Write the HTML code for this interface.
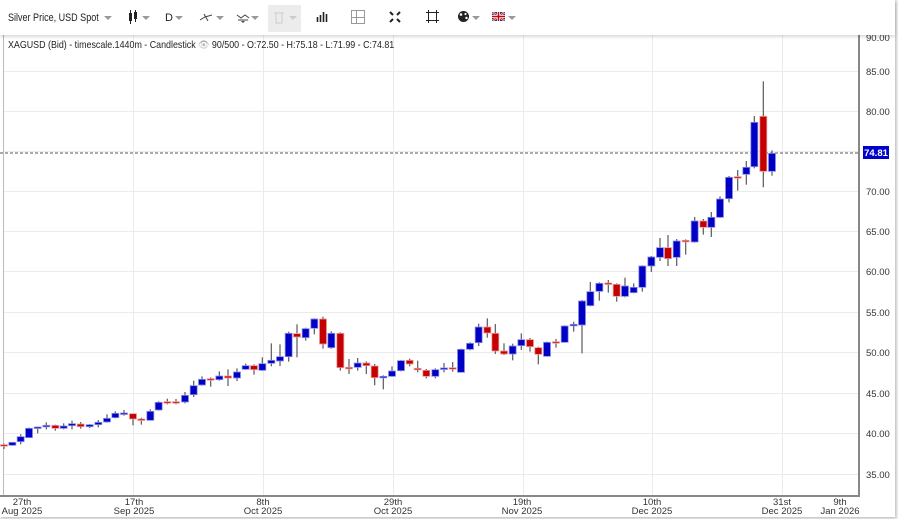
<!DOCTYPE html>
<html><head><meta charset="utf-8">
<style>
*{margin:0;padding:0;box-sizing:border-box}
body{width:898px;height:519px;background:#f2f2f2;font-family:"Liberation Sans",Arial,sans-serif;overflow:hidden;position:relative}
#frame{position:absolute;left:0;top:0;width:895px;height:517px;background:#fff;box-shadow:1px 1px 3px rgba(0,0,0,.25)}
#tb{position:absolute;left:0;top:0;width:895px;height:35px;background:#fff;box-shadow:0 2px 3px rgba(0,0,0,.15);z-index:5}
.t{position:absolute;top:12px;font-size:11px;color:#222;white-space:nowrap}
.car{position:absolute;top:16px;width:0;height:0;border-left:4px solid transparent;border-right:4px solid transparent;border-top:4px solid #999}
svg{position:absolute;left:0;top:0}
</style></head><body>
<div id="frame"></div>
<svg width="898" height="519" id="c">
<g stroke="#ebebeb" stroke-width="1">
<line x1="133.5" y1="35" x2="133.5" y2="495"/><line x1="263.5" y1="35" x2="263.5" y2="495"/><line x1="393.5" y1="35" x2="393.5" y2="495"/><line x1="523.5" y1="35" x2="523.5" y2="495"/><line x1="652.5" y1="35" x2="652.5" y2="495"/><line x1="782.5" y1="35" x2="782.5" y2="495"/>
<line x1="3" y1="71.5" x2="858" y2="71.5"/><line x1="3" y1="111.5" x2="858" y2="111.5"/><line x1="3" y1="151.5" x2="858" y2="151.5"/><line x1="3" y1="191.5" x2="858" y2="191.5"/><line x1="3" y1="231.5" x2="858" y2="231.5"/><line x1="3" y1="271.5" x2="858" y2="271.5"/><line x1="3" y1="312.5" x2="858" y2="312.5"/><line x1="3" y1="352.5" x2="858" y2="352.5"/><line x1="3" y1="393.5" x2="858" y2="393.5"/><line x1="3" y1="433.5" x2="858" y2="433.5"/><line x1="3" y1="474.5" x2="858" y2="474.5"/>
</g>
<line x1="3.5" y1="35" x2="3.5" y2="495" stroke="#bbb"/>
<line x1="859" y1="35" x2="859" y2="497" stroke="#888" stroke-width="2"/>
<line x1="0" y1="496" x2="860" y2="496" stroke="#888" stroke-width="2"/>
<line x1="0" y1="153" x2="858" y2="153" stroke="#555" stroke-dasharray="3,2"/>
<g id="cd"></g>
<g font-size="9.5" fill="#333" font-family="Liberation Sans,Arial,sans-serif">
<text x="866" y="41">90.00</text><text x="866" y="75">85.00</text><text x="866" y="115">80.00</text><text x="866" y="195">70.00</text><text x="866" y="235">65.00</text><text x="866" y="275">60.00</text><text x="866" y="316">55.00</text><text x="866" y="356">50.00</text><text x="866" y="397">45.00</text><text x="866" y="437">40.00</text><text x="866" y="478">35.00</text>
</g>
<rect x="863" y="146" width="26" height="13" fill="#0000cc"/>
<text x="876" y="156" font-size="9.5" font-weight="bold" fill="#fff" text-anchor="middle" font-family="Liberation Sans,Arial,sans-serif">74.81</text>
<g font-size="9.5" fill="#333" text-anchor="middle" font-family="Liberation Sans,Arial,sans-serif">
<text x="22" y="505">27th</text><text x="22" y="514">Aug 2025</text>
<text x="134" y="505">17th</text><text x="134" y="514">Sep 2025</text>
<text x="263" y="505">8th</text><text x="263" y="514">Oct 2025</text>
<text x="393" y="505">29th</text><text x="393" y="514">Oct 2025</text>
<text x="522" y="505">19th</text><text x="522" y="514">Nov 2025</text>
<text x="652" y="505">10th</text><text x="652" y="514">Dec 2025</text>
<text x="782" y="505">31st</text><text x="782" y="514">Dec 2025</text>
<text x="840" y="505">9th</text><text x="840" y="514">Jan 2026</text>
</g>
<text x="8" y="48" font-size="10" fill="#222" font-family="Liberation Sans,Arial,sans-serif" transform="translate(8 0) scale(0.89 1) translate(-8 0)">XAGUSD (Bid) - timescale.1440m - Candlestick <tspan fill="#aaa">👁</tspan> 90/500 - O:72.50 - H:75.18 - L:71.99 - C:74.81</text>
</svg>
<div id="tb">
<span class="t" style="left:8px;transform:scaleX(0.82);transform-origin:left">Silver Price, USD Spot</span><span class="car" style="left:104px"></span>
<svg style="left:128px;top:10px" width="10" height="14"><rect x="1" y="3" width="3" height="8" fill="#222"/><line x1="2.5" y1="0" x2="2.5" y2="14" stroke="#222"/><rect x="6" y="2" width="3" height="7" fill="#222"/><line x1="7.5" y1="0" x2="7.5" y2="12" stroke="#222"/></svg><span class="car" style="left:142px"></span>
<span class="t" style="left:165px">D</span><span class="car" style="left:175px"></span>
<svg style="left:199px;top:11px" width="14" height="12"><path d="M1 9 L6 6 L13 4 M5 3 L9 10" stroke="#444" fill="none"/></svg><span class="car" style="left:216px"></span>
<svg style="left:236px;top:11px" width="14" height="12"><path d="M1 4 L5 7 L9 4 L13 7 M2 9 L12 9" stroke="#444" fill="none"/><path d="M5 10 L7 12 L9 10Z" fill="#444"/></svg><span class="car" style="left:251px"></span>
<div style="position:absolute;left:268px;top:5px;width:33px;height:27px;background:#ececec"></div>
<svg style="left:273px;top:11px" width="12" height="13"><path d="M1 2 H11 M3 2 V12 H9 V2" stroke="#ccc" fill="none"/></svg><span class="car" style="left:289px;border-top-color:#ccc"></span>
<svg style="left:316px;top:12px" width="12" height="10"><path d="M1.5 5V10M4.5 3V10M7.5 0V10M10.5 2V10" stroke="#222" stroke-width="1.6"/></svg>
<svg style="left:351px;top:10px" width="14" height="14"><rect x="0.5" y="0.5" width="13" height="13" fill="none" stroke="#999"/><path d="M5.5 1V13M1 7.5H13" stroke="#999"/></svg>
<svg style="left:389px;top:11px" width="12" height="12"><path d="M1 1L4 4M11 1L8 4M1 11L4 8M11 11L8 8" stroke="#222" stroke-width="2"/></svg>
<svg style="left:426px;top:10px" width="13" height="13"><rect x="2.5" y="2.5" width="8" height="8" fill="none" stroke="#222"/><path d="M0 2.5H13M0 10.5H13M2.5 0V13M10.5 0V13" stroke="#222"/></svg>
<svg style="left:457px;top:10px" width="13" height="13"><circle cx="6.5" cy="6.5" r="5.5" fill="#222"/><circle cx="4" cy="4.5" r="1.3" fill="#fff"/><circle cx="8.5" cy="4" r="1.1" fill="#fff"/><circle cx="9.5" cy="8" r="1.2" fill="#fff"/></svg><span class="car" style="left:472px"></span>
<svg style="left:492px;top:12px" width="13" height="9"><rect width="13" height="9" fill="#1a3a8a"/><path d="M0 0L13 9M13 0L0 9" stroke="#fff" stroke-width="2"/><path d="M0 0L13 9M13 0L0 9" stroke="#c00" stroke-width="0.8"/><path d="M6.5 0V9M0 4.5H13" stroke="#fff" stroke-width="3"/><path d="M6.5 0V9M0 4.5H13" stroke="#c00" stroke-width="1.5"/></svg><span class="car" style="left:508px"></span>
</div>
<script>
var A=[[12,434,438,431,447,'r'],[37,427,436,426,437,'b'],[62,410,425,403,433,'b'],[87,385,413,383,414,'b'],[113,381,384,380,400,'b'],[139,376,380,367,388,'b'],[166,376,385,374,392,'r'],[191,378,385,370,388,'b'],[216,371,377,362,388,'b'],[242,372,380,366,386,'r'],[269,374,380,372,384,'b'],[295,367,374,360,382,'b'],[321,355,366,343,368,'b'],[346,340,353,334,355,'b'],[372,339,343,330,347,'b'],[399,341,357,341,376,'r'],[424,357,361,353,374,'r'],[451,334,361,328,362,'b'],[476,307,330,304,332,'b'],[502,305,309,296,313,'r'],[528,305,309,297,313,'r'],[555,286,306,276,310,'b'],[581,257,284,242,291,'b'],[606,238,255,229,257,'b'],[632,236,240,232,260,'r'],[658,228,239,214,242,'b'],[684,228,234,208,258,'r'],[711,216,234,205,243,'b'],[737,197,208,191,210,'b'],[762,197,209,193,224,'r'],[787,191,211,172,213,'b'],[814,181,190,130,199,'b'],[840,170,183,133,198,'b'],[866,100,170,95,185,'b'],[891,101,111,73,172,'r']];
var B=[[17,86,113,83,122,'b'],[43,57,85,55,103,'b'],[69,57,132,50,146,'r'],[94,100,143,94,146,'b'],[121,100,203,97,212,'r'],[147,202,206,177,222,'r'],[173,189,202,174,212,'b'],[199,189,197,184,222,'r'],[224,198,233,192,256,'r'],[250,229,233,226,268,'b'],[276,213,229,199,231,'b'],[303,182,212,180,214,'b'],[329,181,192,176,199,'r'],[353,205,209,182,217,'r'],[379,211,229,207,235,'r'],[406,209,229,205,235,'b'],[432,204,208,189,217,'b'],[458,203,207,186,215,'r'],[483,148,217,146,218,'b'],[510,130,148,127,151,'b'],[536,81,128,71,138,'b'],[562,81,99,55,113,'r'],[586,100,153,72,162,'r'],[612,153,162,130,165,'r'],[638,138,162,131,181,'b'],[664,119,137,100,150,'b'],[690,119,140,114,155,'r'],[715,143,163,140,193,'r'],[741,127,169,125,170,'b'],[768,125,129,117,143,'r']];
var C=[[14,528,577,526,578,'b'],[41,523,527,515,545,'b'],[66,453,525,450,610,'b'],[91,425,467,396,469,'b'],[118,400,424,397,452,'b'],[145,399,403,390,428,'r'],[170,403,439,400,455,'r'],[195,408,439,383,442,'b'],[221,412,428,400,430,'b'],[247,348,412,346,425,'b'],[274,321,348,318,366,'b'],[300,293,322,264,333,'b'],[324,293,326,255,348,'r'],[350,273,322,267,348,'b'],[377,271,275,268,314,'r'],[404,213,276,201,278,'b'],[430,213,232,207,254,'r'],[454,202,232,186,261,'b'],[480,147,202,139,204,'b'],[507,82,146,78,157,'b'],[533,80,84,60,122,'r'],[559,52,73,33,104,'b']];
var D=[[163,307,440,288,445,'b'],[190,289,454,184,502,'r'],[216,400,454,391,467,'b']];
var g=document.getElementById('cd'),h='';
function add(arr,ox,oy){arr.forEach(function(c){var x=ox+c[0]/3,t=oy+c[1]/3,b=oy+c[2]/3,wt=oy+c[3]/3,wb=oy+c[4]/3;if(b-t<1.5)b=t+1.5;
var f=c[5]=='b'?'#0000c4':'#c40000',s=c[5]=='b'?'#8c8ce8':'#ec9a9a';
h+='<line x1="'+x+'" y1="'+wt+'" x2="'+x+'" y2="'+wb+'" stroke="#666" stroke-width="1.3"/>';
h+='<rect x="'+(x-3.5)+'" y="'+t+'" width="7" height="'+(b-t)+'" fill="'+f+'" stroke="'+s+'" stroke-width="0.8"/>';});}
add(A,0,300);add(B,300,300);add(C,560,150);add(D,700,20);
g.innerHTML=h;
</script>
</body></html>
